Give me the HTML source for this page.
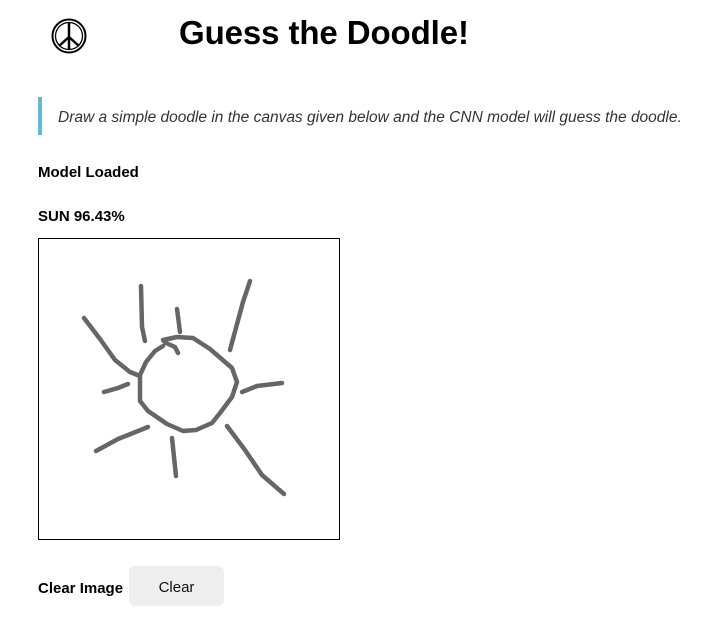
<!DOCTYPE html>
<html><head><meta charset="utf-8">
<style>
*{margin:0;padding:0;box-sizing:border-box}
body{width:713px;height:621px;background:#fff;font-family:"Liberation Sans",sans-serif;color:#000;position:relative;overflow:hidden}
.abs{position:absolute;white-space:nowrap}
h1{position:absolute;left:179px;top:14px;font-size:33px;font-weight:bold;letter-spacing:-0.1px}
.bar{position:absolute;left:38px;top:97px;width:4px;height:38px;background:#5bbcd6}
.quote{left:58px;top:109px;font-size:15.5px;font-style:italic;color:#333}
.b{font-weight:bold;font-size:15px}
.btn{position:absolute;left:129px;top:566px;width:95px;height:40px;background:#eee;border-radius:6px;font-size:15px;text-align:center;line-height:43px;color:#111}
</style></head><body>
<svg class="abs" style="left:50px;top:17px" width="38" height="38" viewBox="0 0 38 38">
<circle cx="19" cy="19" r="16.5" fill="none" stroke="#000" stroke-width="2"/>
<circle cx="19" cy="19" r="13.5" fill="none" stroke="#000" stroke-width="1.3"/>
<line x1="19" y1="5" x2="19" y2="33" stroke="#000" stroke-width="2.5"/>
<line x1="19" y1="20" x2="9" y2="29" stroke="#000" stroke-width="2.5"/>
<line x1="19" y1="20" x2="29" y2="29" stroke="#000" stroke-width="2.5"/>
</svg>
<h1>Guess the Doodle!</h1>
<div class="bar"></div>
<div class="abs quote">Draw a simple doodle in the canvas given below and the CNN model will guess the doodle.</div>
<div class="abs b" style="left:38px;top:164px">Model Loaded</div>
<div class="abs b" style="left:38px;top:208px">SUN 96.43%</div>
<svg class="abs" style="left:0;top:0" width="713" height="621">
<rect x="38.5" y="238.5" width="301" height="301" fill="#fff" stroke="#000" stroke-width="1"/>
<g fill="none" stroke="#666" stroke-width="4.5" stroke-linecap="round" stroke-linejoin="round">
<polyline points="178,353 175,347 166,343 163,340 177,337 193,338 210,349 232,368 237,382 232,397 220,413 212,423 196,430 183,431 167,424 148,411 140,401 140,375 146,362 155,351 163,346"/>
<polyline points="141,286 142,327 145,341"/>
<polyline points="177,309 180,332"/>
<polyline points="250,281 243,302 230,350"/>
<polyline points="84,318 100,339 115,360 130,372 140,376"/>
<polyline points="104,392 118,388 128,384"/>
<polyline points="242,392 257,386 282,383"/>
<polyline points="96,451 118,439 148,427"/>
<polyline points="172,438 176,476"/>
<polyline points="227,426 245,450 262,475 284,494"/>
</g></svg>
<div class="abs b" style="left:38px;top:580px">Clear Image</div>
<div class="btn">Clear</div>
</body></html>
